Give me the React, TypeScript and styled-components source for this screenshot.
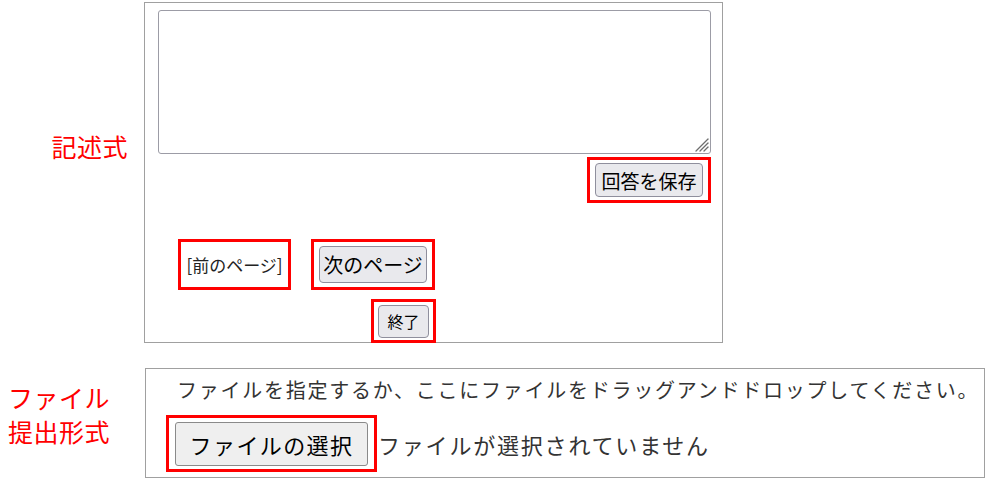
import React from "react";
import styled, { createGlobalStyle } from "styled-components";

const Global = createGlobalStyle`
  html, body { margin: 0; padding: 0; background: #fff; }
  body { font-family: "Noto Sans CJK JP", "Noto Sans", sans-serif; color: #000; }
`;

const Page = styled.div`
  width: 988px;
  height: 485px;
  display: flex;
  flex-direction: column;
  overflow: hidden;
`;

const Section = styled.section<{ $top: number; $labelLeft: number }>`
  display: flex;
  align-items: flex-start;
  margin-top: ${(p) => p.$top}px;
  padding-left: ${(p) => p.$labelLeft}px;
`;

const Label = styled.div<{ $width: number; $align: "left" | "right"; $padTop: number }>`
  width: ${(p) => p.$width}px;
  box-sizing: border-box;
  text-align: ${(p) => p.$align};
  padding-right: ${(p) => (p.$align === "right" ? 16 : 0)}px;
  padding-top: ${(p) => p.$padTop}px;
  color: #ff0000;
  font-size: 25px;
  line-height: 34px;
  letter-spacing: 0.5px;
`;

const Panel = styled.div<{ $w: number; $h: number }>`
  width: ${(p) => p.$w}px;
  height: ${(p) => p.$h}px;
  box-sizing: border-box;
  border: 1px solid #a0a0a0;
  display: flex;
  flex-direction: column;
`;

const EssayBody = styled(Panel)`
  padding: 7px 11px 0 13px;
`;

const AnswerWrap = styled.div`
  position: relative;
  width: 553px;
  height: 144px;
`;

const Answer = styled.textarea`
  width: 553px;
  height: 144px;
  box-sizing: border-box;
  border: 1px solid #9c9ca6;
  border-radius: 3px;
  resize: none;
  margin: 0;
  display: block;
  font: inherit;
`;

const Grip = styled.svg`
  position: absolute;
  right: 2px;
  bottom: 2px;
  width: 14px;
  height: 14px;
  pointer-events: none;
`;

const Highlight = styled.div<{ $px: number; $py: number; $w?: number; $h?: number }>`
  border: 3px solid #ff0000;
  padding: ${(p) => p.$py}px ${(p) => p.$px}px;
  box-sizing: border-box;
  ${(p) => (p.$w ? `width: ${p.$w}px;` : "")}
  ${(p) => (p.$h ? `height: ${p.$h}px;` : "")}
  display: flex;
  align-items: center;
  justify-content: center;
`;

const SaveRow = styled.div`
  display: flex;
  justify-content: flex-end;
  margin-top: 3px;
`;

const NavRow = styled.div`
  display: flex;
  gap: 20px;
  margin-top: 36px;
  margin-left: 20px;
`;

const EndRow = styled.div`
  display: flex;
  margin-top: 9px;
  margin-left: 213px;
`;

const FormButton = styled.button<{ $size: number; $w: number; $h: number }>`
  width: ${(p) => p.$w}px;
  height: ${(p) => p.$h}px;
  box-sizing: border-box;
  font-family: "Noto Sans CJK JP", sans-serif;
  font-size: ${(p) => p.$size}px;
  line-height: 1;
  color: #000;
  background: #e9e9ed;
  border: 1px solid #8f8f9d;
  border-radius: 4px;
  padding: 0;
  display: flex;
  align-items: center;
  justify-content: center;
`;

const PrevText = styled.span`
  font-size: 17px;
  color: #222;
  line-height: 1;
`;

const UploadBody = styled(Panel)`
  padding: 4px 0 0 20px;
`;

const Instruction = styled.div`
  font-size: 20px;
  letter-spacing: 1.75px;
  color: #333;
  line-height: 34px;
  padding-left: 11px;
  white-space: nowrap;
`;

const FileRow = styled.div`
  display: flex;
  align-items: center;
  margin-top: 8px;
`;

const FileButton = styled.button`
  width: 194px;
  height: 44px;
  box-sizing: border-box;
  font-family: "Noto Sans CJK JP", sans-serif;
  font-size: 22px;
  letter-spacing: 1.4px;
  color: #000;
  background: #efefef;
  border: 1px solid #8a8a8a;
  border-radius: 3px;
  padding: 0;
`;

const FileStatus = styled.span`
  font-size: 22px;
  letter-spacing: 1.8px;
  color: #333;
  margin-left: 1px;
`;

export default function App() {
  return (
    <Page>
      <Global />
      <Section $top={2} $labelLeft={0}>
        <Label $width={144} $align="right" $padTop={127}>
          記述式
        </Label>
        <EssayBody $w={579} $h={341}>
          <AnswerWrap>
            <Answer />
            <Grip viewBox="0 0 14 14">
              <g stroke="#6e6e6e" strokeWidth="1.3" strokeLinecap="round">
                <line x1="13" y1="1" x2="1" y2="13" />
                <line x1="13" y1="5" x2="5" y2="13" />
                <line x1="13" y1="9" x2="9" y2="13" />
              </g>
            </Grip>
          </AnswerWrap>
          <SaveRow>
            <Highlight $px={5} $py={3}>
              <FormButton $size={19} $w={108} $h={34}>
                回答を保存
              </FormButton>
            </Highlight>
          </SaveRow>
          <NavRow>
            <Highlight $px={0} $py={0} $w={113} $h={51}>
              <PrevText>[前のページ]</PrevText>
            </Highlight>
            <Highlight $px={5} $py={5} $w={124} $h={51}>
              <FormButton $size={20} $w={108} $h={37}>
                次のページ
              </FormButton>
            </Highlight>
          </NavRow>
          <EndRow>
            <Highlight $px={4} $py={4} $w={65} $h={44}>
              <FormButton $size={16} $w={51} $h={33}>
                終了
              </FormButton>
            </Highlight>
          </EndRow>
        </EssayBody>
      </Section>
      <Section $top={25} $labelLeft={8}>
        <Label $width={137} $align="left" $padTop={12}>
          ファイル
          <br />
          提出形式
        </Label>
        <UploadBody $w={840} $h={110}>
          <Instruction>ファイルを指定するか、ここにファイルをドラッグアンドドロップしてください。</Instruction>
          <FileRow>
            <Highlight $px={6} $py={4} $w={211} $h={57}>
              <FileButton>ファイルの選択</FileButton>
            </Highlight>
            <FileStatus>ファイルが選択されていません</FileStatus>
          </FileRow>
        </UploadBody>
      </Section>
    </Page>
  );
}
